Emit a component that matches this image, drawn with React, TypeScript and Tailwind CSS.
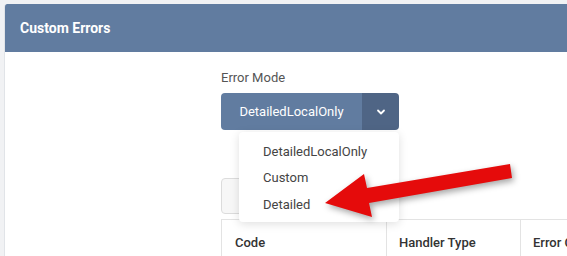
import React from "react";

export default function App() {
  return (
    <div
      className="relative h-[256px] w-[567px] overflow-hidden bg-[#f1f2f4] pl-[4px] pt-[4px]"
      style={{ fontFamily: "Roboto, 'Liberation Sans', sans-serif" }}
    >
      <div className="h-full overflow-hidden rounded-tl-[3px] border-l border-[#e1e4e8] bg-white">
        <div className="-ml-px flex h-[48px] items-center rounded-tl-[3px] bg-[#617ca0] pl-[16px] text-[14px] font-bold text-white">
          Custom Errors
        </div>
        <div className="pl-[216px] pt-[17px]">
          <div className="h-[18px] text-[13px] leading-[18px] text-[#555]">Error Mode</div>
          <div className="relative mt-[6px] flex h-[37px] w-[178px]">
            <div className="flex h-full w-[141px] items-center justify-center rounded-l-[4px] bg-[#617ca0] text-[13px] text-white">
              DetailedLocalOnly
            </div>
            <div className="flex h-full w-[37px] items-center justify-center rounded-r-[4px] bg-[#4f6585]">
              <svg width="10" height="8" viewBox="0 0 10 8" fill="none">
                <path d="M2 2.5 L5 5.5 L8 2.5" stroke="white" strokeWidth="1.8" strokeLinecap="round" strokeLinejoin="round" />
              </svg>
            </div>
            <div className="absolute left-[18px] top-[39px] z-10 w-[160px] rounded-[4px] bg-white pb-[4.5px] pt-[6px] text-[13px] text-[#444] shadow-[0_2px_10px_rgba(0,0,0,0.13)]">
              {["DetailedLocalOnly", "Custom", "Detailed"].map((t) => (
                <div key={t} className="flex h-[26.5px] items-center pl-[24px]">
                  {t}
                </div>
              ))}
            </div>
          </div>
          <div className="mt-[48px] h-[36px] w-[130px] rounded-[4px] border border-[#dcdcdc] bg-[#f7f7f7]" />
          <div className="mt-[5px] flex w-[400px] border-l border-t border-[#e3e3e3] text-[13px] font-medium text-[#333]">
            <div className="h-[40px] w-[165px] shrink-0 border-r border-[#e3e3e3] pl-[13px] pt-[14px] leading-[18px]">Code</div>
            <div className="w-[134px] shrink-0 border-r border-[#e3e3e3] pl-[12px] pt-[14px] leading-[18px]">Handler Type</div>
            <div className="w-[120px] shrink-0 whitespace-nowrap pl-[12px] pt-[14px] leading-[18px]">Error Code</div>
          </div>
        </div>
      </div>
      <svg
        className="pointer-events-none absolute left-0 top-0 z-20"
        width="567"
        height="256"
        viewBox="0 0 567 256"
        style={{ filter: "drop-shadow(2px 3px 3px rgba(0,0,0,0.35))" }}
      >
        <polygon
          points="325,203 364,174 367,188 510,164 512,178 369,203 372,217"
          fill="#e50b0b"
        />
      </svg>
    </div>
  );
}
